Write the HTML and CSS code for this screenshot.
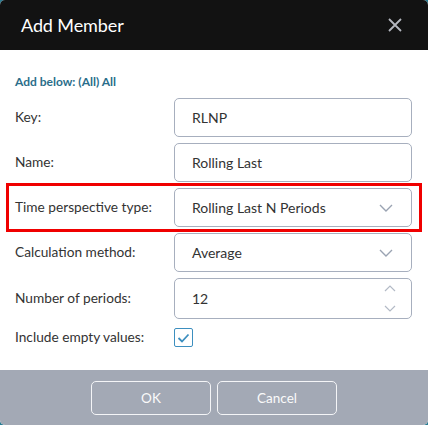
FILE: index.html
```html
<!DOCTYPE html>
<html>
<head>
<meta charset="utf-8">
<link rel="stylesheet" href="styles.css">
</head>
<body>
<div class="dialog">
  <div class="header">
    <span class="title">Add Member</span>
    <svg class="close" width="14" height="14" viewBox="0 0 14 14"><path d="M1 1L13 13M13 1L1 13" stroke="#b4b7bf" stroke-width="1.8" fill="none"/></svg>
  </div>
  <div class="body">
    <div class="addbelow">Add below: (All) All</div>
    <div class="form">
      <div class="row">
        <label class="lbl">Key:</label>
        <div class="field">RLNP</div>
      </div>
      <div class="row">
        <label class="lbl">Name:</label>
        <div class="field">Rolling Last</div>
      </div>
      <div class="row highlight">
        <label class="lbl">Time perspective type:</label>
        <div class="field select">Rolling Last N Periods
          <svg class="chev" width="14" height="8" viewBox="0 0 14 8"><path d="M1 1L7 7L13 1" stroke="#9aa3b2" stroke-width="1.4" fill="none"/></svg>
        </div>
      </div>
      <div class="row">
        <label class="lbl">Calculation method:</label>
        <div class="field select">Average
          <svg class="chev" width="14" height="8" viewBox="0 0 14 8"><path d="M1 1L7 7L13 1" stroke="#9aa3b2" stroke-width="1.4" fill="none"/></svg>
        </div>
      </div>
      <div class="row num">
        <label class="lbl">Number of periods:</label>
        <div class="field select">12
          <div class="spin">
            <svg width="12" height="7" viewBox="0 0 12 7"><path d="M1 6L6 1L11 6" stroke="#b3bac6" stroke-width="1.2" fill="none"/></svg>
            <svg width="12" height="7" viewBox="0 0 12 7"><path d="M1 1L6 6L11 1" stroke="#b3bac6" stroke-width="1.2" fill="none"/></svg>
          </div>
        </div>
      </div>
      <div class="row check">
        <label class="lbl">Include empty values:</label>
        <div class="box">
          <svg width="13" height="10" viewBox="0 0 13 10"><path d="M1.5 5L5 8.5L11.5 1.5" stroke="#3d8fbf" stroke-width="1.8" fill="none"/></svg>
        </div>
      </div>
    </div>
  </div>
  <div class="footer">
    <button class="btn">OK</button>
    <button class="btn">Cancel</button>
  </div>
</div>
</body>
</html>
```

FILE: styles.css
```css
html, body {
  margin: 0;
  padding: 0;
  background: #2a7d93;
}
body {
  width: 428px;
  height: 425px;
  font-family: Lato, "Open Sans", sans-serif;
}
.dialog {
  width: 428px;
  height: 425px;
  background: #fff;
  border-radius: 5px;
  overflow: hidden;
  display: flex;
  flex-direction: column;
}
.header {
  height: 50px;
  flex: none;
  background: #121212;
  display: flex;
  align-items: center;
  justify-content: space-between;
  padding: 0 26px 0 21px;
}
.title {
  color: #fff;
  font-size: 18px;
  letter-spacing: -0.1px;
}
.close {
  display: block;
}
.body {
  flex: 1;
  padding: 25px 16px 0 15px;
}
.addbelow {
  color: #2b6e8a;
  font-size: 12px;
  font-weight: bold;
  line-height: 14px;
  margin-bottom: 9px;
}
.form {
  display: flex;
  flex-direction: column;
  gap: 6px;
}
.row {
  display: grid;
  grid-template-columns: 159px 1fr;
  align-items: center;
  position: relative;
}
.lbl {
  color: #333;
  font-size: 13.7px;
  line-height: 16px;
  margin-top: -2px;
}
.field {
  height: 37px;
  border: 1px solid #a7afbe;
  border-radius: 5px;
  display: flex;
  align-items: center;
  padding: 0 12px 0 17px;
  color: #333;
  font-size: 14px;
  position: relative;
}
.select {
  justify-content: space-between;
}
.chev {
  margin-right: 6px;
}
.num .field {
  height: 39px;
}
.spin {
  display: flex;
  flex-direction: column;
  gap: 13px;
  margin-right: 3px;
}
.spin svg {
  display: block;
}
.highlight::before {
  content: "";
  position: absolute;
  left: -9px;
  right: -10px;
  top: -5px;
  bottom: -5px;
  border: 3px solid #f00000;
  pointer-events: none;
}
.check {
  margin-top: 3px;
}
.box {
  width: 17px;
  height: 17px;
  border: 1px solid #3d8fbf;
  border-radius: 2px;
  display: flex;
  align-items: center;
  justify-content: center;
}
.footer {
  height: 55px;
  flex: none;
  background: #a3a9b5;
  display: flex;
  justify-content: center;
  align-items: center;
  gap: 6px;
}
.btn {
  width: 120px;
  height: 34px;
  background: transparent;
  border: 1px solid #f4f5f7;
  border-radius: 5px;
  color: #fafafa;
  font-family: Lato, "Open Sans", sans-serif;
  font-size: 13.5px;
}
```
